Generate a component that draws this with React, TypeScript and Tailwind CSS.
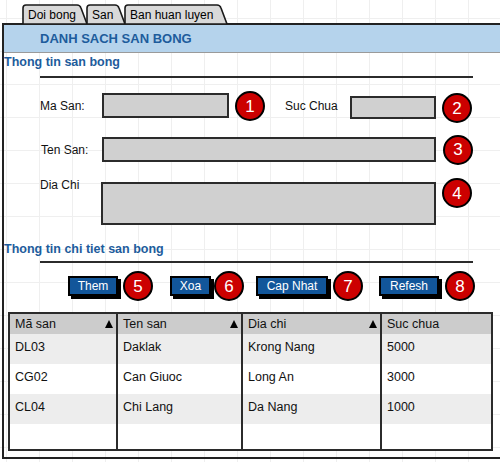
const rows = [
  { ma: 'DL03', ten: 'Daklak', diaChi: 'Krong Nang', sucChua: '5000' },
  { ma: 'CG02', ten: 'Can Giuoc', diaChi: 'Long An', sucChua: '3000' },
  { ma: 'CL04', ten: 'Chi Lang', diaChi: 'Da Nang', sucChua: '1000' },
];

function Tab({ label, width }: { label: string; width: number }) {
  return (
    <div className="relative h-[19px] -mr-[2px] shrink-0" style={{ width }}>
      <svg className="absolute inset-0" width={width} height={20} viewBox={`0 0 ${width} 20`}>
        <path
          d={`M1 20 V4 Q1 1 4 1 H${width - 11} Q${width - 8} 1 ${width - 7} 4 L${width - 1} 20 Z`}
          fill="#d9d9d9"
          stroke="#1a1a1a"
          strokeWidth="1.6"
        />
      </svg>
      <span className="relative block pl-[6px] pt-[3px] text-[12px] leading-[16px] text-black">{label}</span>
    </div>
  );
}

function Badge({ n }: { n: number }) {
  return (
    <div className="w-[30px] h-[30px] shrink-0 rounded-full bg-[#cc0000] border-2 border-black flex items-center justify-center text-white text-[17px] leading-none">
      {n}
    </div>
  );
}

function Btn({ label, width }: { label: string; width: number }) {
  return (
    <div
      className="h-[20px] shrink-0 bg-[#12569a] border-2 border-black shadow-[3px_3px_0_#000] flex items-center justify-center text-white text-[12px]"
      style={{ width }}
    >
      {label}
    </div>
  );
}

function SortArrow() {
  return <span className="w-0 h-0 border-x-[4px] border-x-transparent border-b-[8px] border-b-black mr-[3px]" />;
}

function Column({
  title,
  sortable,
  width,
  values,
  last,
}: {
  title: string;
  sortable?: boolean;
  width: number;
  values: string[];
  last?: boolean;
}) {
  return (
    <div className={`flex flex-col shrink-0 ${last ? '' : 'border-r-2 border-[#2b2b2b]'}`} style={{ width }}>
      <div className="h-[20px] bg-[#cccccc] flex items-center justify-between pl-[5px] text-[12.5px]">
        <span>{title}</span>
        {sortable && <SortArrow />}
      </div>
      {values.map((v, i) => (
        <div
          key={i}
          className={`h-[30px] pt-[5px] pl-[5px] text-[12.5px] leading-[16px] ${i % 2 === 0 ? 'bg-[#ededed]' : 'bg-white'}`}
        >
          {v}
        </div>
      ))}
      <div className="flex-1 bg-white" />
    </div>
  );
}

export default function App() {
  return (
    <div className="w-[500px] h-[462px] overflow-hidden bg-white bg-[linear-gradient(to_right,#efefef_1px,transparent_1px),linear-gradient(to_bottom,#efefef_1px,transparent_1px)] bg-[size:33px_33px] bg-[position:6px_18px] font-['Liberation_Sans',Arial,sans-serif] text-[#111]">
      {/* Tabs */}
      <div className="flex pl-[22px] pt-[4px] h-[23px]">
        <Tab label="Doi bong" width={66} />
        <Tab label="San" width={40} />
        <Tab label="Ban huan luyen" width={104} />
      </div>

      {/* Window */}
      <div className="ml-[2px] w-[500px] h-[436px] border-2 border-[#222] flex flex-col">
        <div className="h-[28px] shrink-0 bg-[#b5d3ec] border-b border-[#9a9a9a] flex items-center pl-[36px]">
          <span className="text-[13px] font-bold text-[#1d5c9c]">DANH SACH SAN BONG</span>
        </div>

        <div className="mt-[1px] h-[16px] leading-[16px] text-[12.5px] font-bold text-[#1d5c9c]">Thong tin san bong</div>
        <div className="mt-[6px] ml-[36px] w-[433px] h-[2px] bg-[#2b2b2b]" />

        {/* Ma San / Suc Chua */}
        <div className="mt-[15px] h-[26px] flex items-center">
          <span className="ml-[36px] w-[62px] text-[12px]">Ma San:</span>
          <div className="w-[127px] h-[25px] self-start bg-[#d0d0d0] border-2 border-[#2b2b2b]" />
          <div className="ml-[6px]">
            <Badge n={1} />
          </div>
          <span className="ml-[20px] w-[65px] text-[12px]">Suc Chua</span>
          <div className="w-[86px] h-[23px] self-end bg-[#d0d0d0] border-2 border-[#2b2b2b]" />
          <div className="ml-[6px] mt-[4px]">
            <Badge n={2} />
          </div>
        </div>

        {/* Ten San */}
        <div className="mt-[18px] h-[25px] flex items-center">
          <span className="ml-[37px] w-[61px] text-[12px]">Ten San:</span>
          <div className="w-[334px] h-[25px] bg-[#d0d0d0] border-2 border-[#2b2b2b]" />
          <div className="ml-[7px]">
            <Badge n={3} />
          </div>
        </div>

        {/* Dia Chi */}
        <div className="mt-[15px] flex items-start">
          <span className="ml-[36px] w-[61px] text-[12px] leading-[16px]">Dia Chi</span>
          <div className="mt-[5px] w-[335px] h-[43px] bg-[#d0d0d0] border-2 border-[#2b2b2b]" />
          <div className="ml-[6px] mt-[1px]">
            <Badge n={4} />
          </div>
        </div>

        <div className="mt-[16px] h-[16px] leading-[16px] text-[12.5px] font-bold text-[#1d5c9c]">
          Thong tin chi tiet san bong
        </div>
        <div className="mt-[4px] ml-[36px] w-[433px] h-[2px] bg-[#2b2b2b]" />

        {/* Buttons */}
        <div className="mt-[8px] h-[30px] flex items-center">
          <div className="ml-[64px]">
            <Btn label="Them" width={50} />
          </div>
          <div className="ml-[5px]">
            <Badge n={5} />
          </div>
          <div className="ml-[17px]">
            <Btn label="Xoa" width={41} />
          </div>
          <div className="ml-[3px]">
            <Badge n={6} />
          </div>
          <div className="ml-[12px]">
            <Btn label="Cap Nhat" width={72} />
          </div>
          <div className="ml-[5px]">
            <Badge n={7} />
          </div>
          <div className="ml-[16px]">
            <Btn label="Refesh" width={60} />
          </div>
          <div className="ml-[6px]">
            <Badge n={8} />
          </div>
        </div>

        {/* Table */}
        <div className="mt-[11px] ml-[4px] w-[485px] h-[139px] border-2 border-[#2b2b2b] flex">
          <Column title="Mã san" sortable width={108} values={rows.map((r) => r.ma)} />
          <Column title="Ten san" sortable width={125} values={rows.map((r) => r.ten)} />
          <Column title="Dia chi" sortable width={139} values={rows.map((r) => r.diaChi)} />
          <Column title="Suc chua" width={109} values={rows.map((r) => r.sucChua)} last />
        </div>
      </div>
    </div>
  );
}
